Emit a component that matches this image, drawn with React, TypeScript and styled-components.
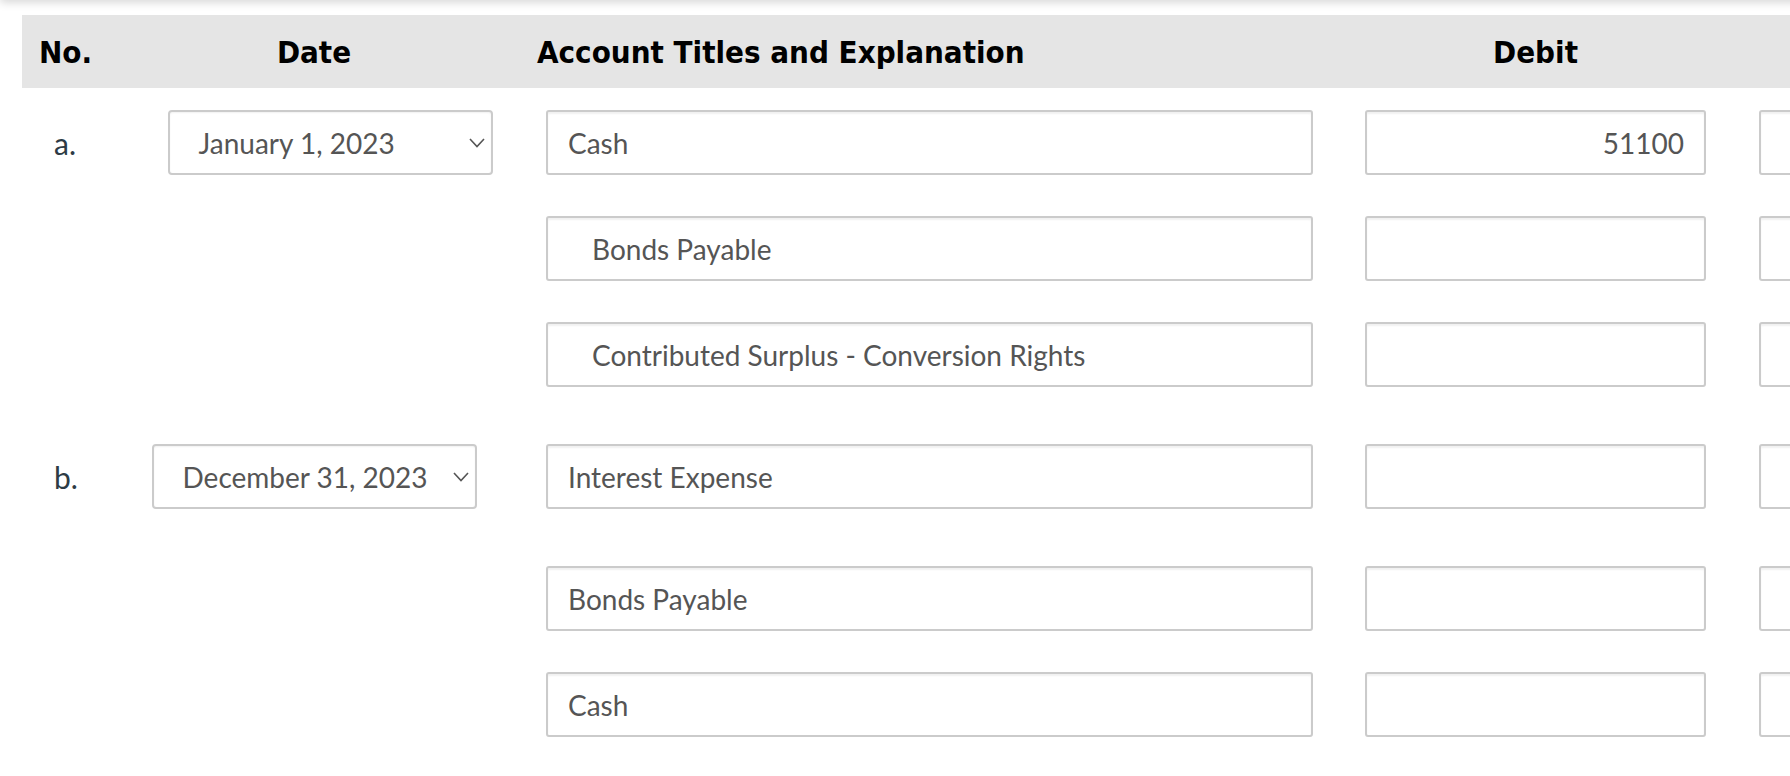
import styled, { createGlobalStyle } from 'styled-components';

const GlobalStyle = createGlobalStyle`
  html, body {
    margin: 0;
    padding: 0;
    background: #ffffff;
    overflow: hidden;
  }
  body {
    font-family: Lato, "Open Sans", sans-serif;
  }
`;

const COLUMNS = '108px 368px 841px 393px 393px';

const Page = styled.div`
  position: relative;
  padding: 15px 0 0 22px;
  width: 2200px;

  &::before {
    content: '';
    position: absolute;
    top: -10px;
    left: 0;
    right: 0;
    height: 10px;
    box-shadow: 0 2px 10px rgba(0, 0, 0, 0.18);
  }
`;

const HeaderRow = styled.div`
  display: grid;
  grid-template-columns: ${COLUMNS};
  align-items: center;
  height: 73px;
  background: #e5e5e5;
`;

const HeaderCell = styled.div<{ $align?: 'left' | 'center' }>`
  font-family: "DejaVu Sans Condensed", "DejaVu Sans", Verdana, sans-serif;
  font-stretch: semi-condensed;
  font-weight: 700;
  font-size: 31px;
  color: #000;
  text-align: ${(p) => p.$align ?? 'center'};
  padding-left: ${(p) => (p.$align === 'left' ? '17px' : '0')};
`;

const AccountHeader = styled(HeaderCell)`
  padding-left: 39px;
`;

const Body = styled.div`
  display: flex;
  flex-direction: column;
  padding-top: 22px;
`;

const Row = styled.div<{ $space: number }>`
  display: grid;
  grid-template-columns: ${COLUMNS};
  align-items: center;
  margin-top: ${(p) => p.$space}px;
`;

const Label = styled.div`
  padding-left: 32px;
  font-size: 30px;
  color: #2d3b45;
`;

const DateCell = styled.div<{ $shift: number }>`
  display: flex;
  justify-content: center;
  padding-left: ${(p) => p.$shift * 2}px;
`;

const Select = styled.div`
  box-sizing: border-box;
  width: 325px;
  height: 65px;
  display: flex;
  align-items: center;
  padding: 0 6px 0 29px;
  border: 2px solid #cbcbcb;
  border-radius: 4px;
  box-shadow: inset 0 1px 2px rgba(0, 0, 0, 0.06);
  font-size: 28px;
  color: #555;
  background: #fff;

  svg {
    margin-left: auto;
  }
`;

const InputCell = styled.div<{ $left: number }>`
  padding-left: ${(p) => p.$left}px;
`;

const Field = styled.div<{ $width: number; $indent?: boolean; $right?: boolean }>`
  box-sizing: border-box;
  width: ${(p) => p.$width}px;
  height: 65px;
  display: flex;
  align-items: center;
  justify-content: ${(p) => (p.$right ? 'flex-end' : 'flex-start')};
  padding: 0 20px 0 ${(p) => (p.$indent ? 44 : 20)}px;
  border: 2px solid #cbcbcb;
  border-radius: 3px;
  box-shadow: inset 0 2px 2px rgba(0, 0, 0, 0.06);
  font-size: 28px;
  color: #555;
  background: #fff;
`;

const Chevron = () => (
  <svg width="16" height="10" viewBox="0 0 16 10" fill="none">
    <path d="M1 1 L8 8.5 L15 1" stroke="#555" strokeWidth="1.6" />
  </svg>
);

type Line = {
  label?: string;
  date?: string;
  shift?: number;
  account: string;
  indent?: boolean;
  debit?: string;
  space: number;
};

const lines: Line[] = [
  { label: 'a.', date: 'January 1, 2023', shift: 16, account: 'Cash', debit: '51100', space: 0 },
  { account: 'Bonds Payable', indent: true, space: 41 },
  { account: 'Contributed Surplus - Conversion Rights', indent: true, space: 41 },
  { label: 'b.', date: 'December 31, 2023', shift: 0, account: 'Interest Expense', space: 57 },
  { account: 'Bonds Payable', space: 57 },
  { account: 'Cash', space: 41 },
];

export default function App() {
  return (
    <>
      <GlobalStyle />
      <Page>
        <HeaderRow>
          <HeaderCell $align="left">No.</HeaderCell>
          <HeaderCell>Date</HeaderCell>
          <AccountHeader $align="left">Account Titles and Explanation</AccountHeader>
          <HeaderCell>Debit</HeaderCell>
          <HeaderCell />
        </HeaderRow>
        <Body>
          {lines.map((l, i) => (
            <Row key={i} $space={l.space}>
              <Label>{l.label ?? ''}</Label>
              <DateCell $shift={l.shift ?? 0}>
                {l.date && (
                  <Select>
                    {l.date}
                    <Chevron />
                  </Select>
                )}
              </DateCell>
              <InputCell $left={48}>
                <Field $width={767} $indent={l.indent}>
                  {l.account}
                </Field>
              </InputCell>
              <InputCell $left={26}>
                <Field $width={341} $right>
                  {l.debit ?? ''}
                </Field>
              </InputCell>
              <InputCell $left={27}>
                <Field $width={341} $right />
              </InputCell>
            </Row>
          ))}
        </Body>
      </Page>
    </>
  );
}
